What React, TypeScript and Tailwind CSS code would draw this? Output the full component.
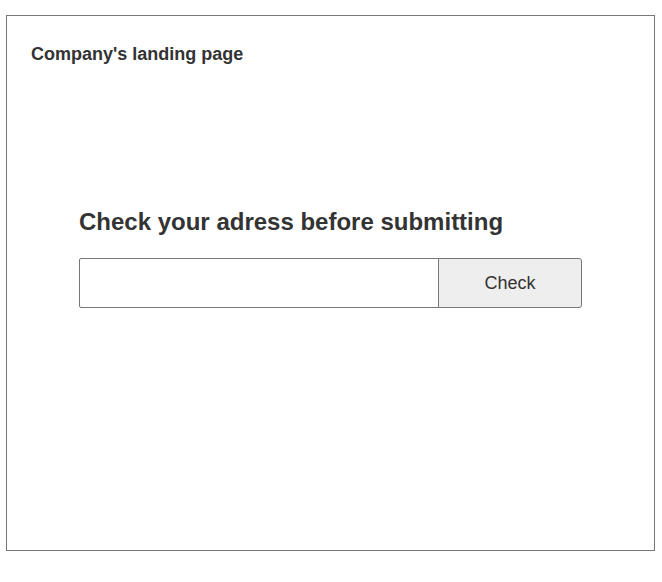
export default function App() {
  return (
    <div className="w-[662px] h-[582px] bg-white pt-[15px] pl-[6px] font-['Liberation_Sans',Arial,sans-serif] text-[#333]">
      <div className="w-[649px] h-[536px] border border-[#777] flex flex-col">
        {/* Header */}
        <div className="pl-[24px] pt-[27px] text-[18px] font-bold leading-[22px]">Company's landing page</div>

        {/* Address check */}
        <div className="pl-[72px] pt-[143px] flex flex-col">
          <h1 className="text-[24px] font-bold leading-[28px]">Check your adress before submitting</h1>
          <div className="flex mt-[22px]">
            <input
              type="text"
              className="w-[360px] h-[50px] border border-[#777] rounded-l-[2px] bg-white outline-none px-3"
            />
            <button className="-ml-px w-[144px] h-[50px] border border-[#777] rounded-r-[3px] bg-[#eee] text-[18px] text-[#333]">
              Check
            </button>
          </div>
        </div>
      </div>
    </div>
  );
}
